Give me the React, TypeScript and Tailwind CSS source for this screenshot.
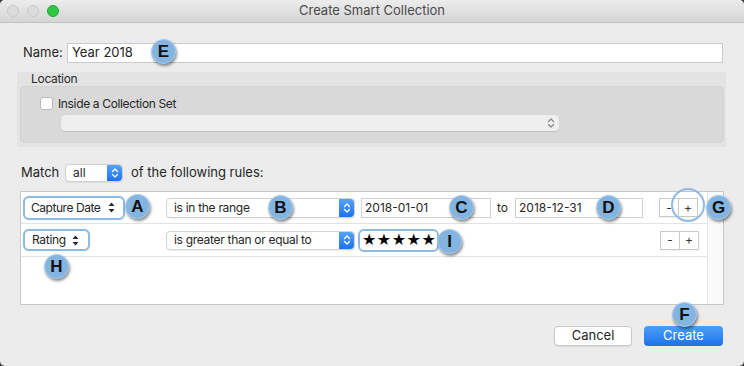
import React from "react";

function UpDownFilled() {
  return (
    <svg width="7" height="11" viewBox="0 0 7 11" className="shrink-0">
      <polygon points="3.5,0.5 6.5,4 0.5,4" fill="#2a2a2a" />
      <polygon points="0.5,7 6.5,7 3.5,10.5" fill="#2a2a2a" />
    </svg>
  );
}

function UpDownStroke({ color }: { color: string }) {
  return (
    <svg width="8" height="12" viewBox="0 0 8 12" className="shrink-0">
      <path d="M1.5 4.5 L4 2 L6.5 4.5" fill="none" stroke={color} strokeWidth="1.3" strokeLinecap="round" strokeLinejoin="round" />
      <path d="M1.5 7.5 L4 10 L6.5 7.5" fill="none" stroke={color} strokeWidth="1.3" strokeLinecap="round" strokeLinejoin="round" />
    </svg>
  );
}

function BlueStep() {
  return (
    <div className="flex h-full w-[15px] shrink-0 items-center justify-center rounded-r-[4px] bg-gradient-to-b from-[#56a3f9] to-[#1b72ea]">
      <UpDownStroke color="#ffffff" />
    </div>
  );
}

function Badge({ letter, className }: { letter: string; className: string }) {
  return (
    <div
      className={
        "absolute flex h-[25px] w-[25px] items-center justify-center rounded-full border border-[#a6cbee] bg-[#84b4e0] text-[17px] font-bold leading-none text-[#111] shadow-[1px_2px_3px_rgba(0,0,0,0.45)] font-['Liberation_Sans',sans-serif] " +
        className
      }
    >
      {letter}
    </div>
  );
}

function PlusMinus() {
  return (
    <div className="flex h-[19px] w-[39px] border border-[#c9c9c9] bg-white text-[12px] text-[#333] shadow-[0_1px_0_rgba(0,0,0,0.05)]">
      <div className="flex flex-1 items-center justify-center border-r border-[#c9c9c9] leading-none">-</div>
      <div className="flex flex-1 items-center justify-center leading-none">+</div>
    </div>
  );
}

export default function App() {
  return (
    <div className="h-[366px] w-[744px] bg-[#3a3a3a] font-[Inter,sans-serif]">
      <div className="relative h-[366px] w-[744px] overflow-hidden rounded-[5px] bg-[#ececec] text-[13px] text-[#262626]">
        {/* Title bar */}
        <div className="relative flex h-[23px] items-center border-b border-[#c2c2c2] bg-gradient-to-b from-[#ececec] to-[#d5d5d5]">
          <div className="flex gap-[8px] pl-[7px]">
            <span className="h-[12px] w-[12px] rounded-full border border-[#c8c8c8] bg-[#dcdcdc]" />
            <span className="h-[12px] w-[12px] rounded-full border border-[#c8c8c8] bg-[#dcdcdc]" />
            <span className="h-[12px] w-[12px] rounded-full border border-[#23a936] bg-[#2ec942]" />
          </div>
          <div className="absolute inset-0 flex items-center justify-center text-[13px] text-[#4a4a4a]">
            Create Smart Collection
          </div>
        </div>

        {/* Name row */}
        <div className="mt-[20px] flex h-[20px] items-center">
          <span className="ml-[23px] w-[44px]">Name:</span>
          <div className="flex h-[20px] w-[656px] items-center border border-[#cacaca] bg-white pl-[4px]">Year 2018</div>
        </div>

        {/* Location */}
        <div className="ml-[17px] mt-[9px] flex h-[75px] w-[709px] flex-col bg-[#e3e3e3]">
          <div className="h-[14px] pl-[14px] text-[12px] leading-[14px] tracking-[-0.3px] text-[#2a2a2a]">Location</div>
          <div className="ml-[3px] flex h-[57px] w-[704px] flex-col rounded-[4px] border border-[#d3d3d3] bg-[#d9d9d9]">
            <div className="ml-[19px] mt-[10px] flex h-[13px] items-center gap-[5px] text-[12px] tracking-[-0.35px]">
              <span className="h-[13px] w-[13px] rounded-[3px] border border-[#b8b8b8] bg-white" />
              <span>Inside a Collection Set</span>
            </div>
            <div className="ml-[40px] mt-[5px] flex h-[16px] w-[498px] items-center justify-end rounded-[4px] bg-[#efefef] pr-[4px] shadow-[0_0.5px_1px_rgba(0,0,0,0.12)]">
              <UpDownStroke color="#8a8a8a" />
            </div>
          </div>
        </div>

        {/* Match row */}
        <div className="mt-[17px] flex h-[18px] items-center">
          <span className="ml-[21px] w-[44px]">Match</span>
          <div className="flex h-[18px] w-[58px] items-center rounded-[4px] border border-[#cfcfcf] bg-white shadow-[0_1px_1px_rgba(0,0,0,0.06)]">
            <span className="flex-1 pl-[7px] text-[12px]">all</span>
            <BlueStep />
          </div>
          <span className="ml-[8px]">of the following rules:</span>
        </div>

        {/* Rules table */}
        <div className="ml-[20px] mt-[9px] flex h-[114px] w-[704px] border border-[#c7c7c7] bg-white">
          <div className="flex flex-1 flex-col">
            {/* Row 1 */}
            <div className="flex h-[32px] items-center border-b border-[#e3e3e3]">
              <div className="ml-[2px] flex h-[24px] w-[102px] items-center gap-[6px] whitespace-nowrap rounded-[6px] border-2 border-[#8fbbe3] bg-white pl-[6px] pr-[8px] text-[12px] tracking-[-0.45px] shadow-[0_0_1px_rgba(0,0,0,0.2)]">
                <span className="flex-1">Capture Date</span>
                <UpDownFilled />
              </div>
              <div className="ml-[41px] flex h-[20px] w-[189px] items-center whitespace-nowrap rounded-[4px] border border-[#d2d2d2] bg-white text-[12px] tracking-[-0.3px] shadow-[0_1px_1px_rgba(0,0,0,0.06)]">
                <span className="flex-1 pl-[7px]">is in the range</span>
                <BlueStep />
              </div>
              <div className="ml-[6px] flex h-[20px] w-[130px] items-center border border-[#d0d0d0] bg-white pl-[3px] text-[12px]">2018-01-01</div>
              <span className="ml-[6px] text-[12px]">to</span>
              <div className="ml-[7px] flex h-[20px] w-[128px] items-center border border-[#d0d0d0] bg-white pl-[3px] text-[12px]">2018-12-31</div>
              <div className="ml-[16px]">
                <PlusMinus />
              </div>
            </div>
            {/* Row 2 */}
            <div className="flex h-[33px] items-center border-b border-[#e3e3e3]">
              <div className="ml-[2px] flex h-[22px] w-[67px] items-center gap-[6px] whitespace-nowrap rounded-[6px] border-2 border-[#8fbbe3] bg-white pl-[7px] pr-[9px] text-[12px] tracking-[-0.3px] shadow-[0_0_1px_rgba(0,0,0,0.2)]">
                <span className="flex-1">Rating</span>
                <UpDownFilled />
              </div>
              <div className="ml-[76px] flex h-[19px] w-[189px] items-center whitespace-nowrap rounded-[4px] border border-[#d2d2d2] bg-white text-[12px] tracking-[-0.3px] shadow-[0_1px_1px_rgba(0,0,0,0.06)]">
                <span className="flex-1 pl-[7px]">is greater than or equal to</span>
                <BlueStep />
              </div>
              <div className="ml-[3px] flex h-[23px] w-[81px] items-center rounded-[6px] border-2 border-[#8fbbe3] bg-white pl-[2px] text-[16px] leading-none tracking-[0.5px] text-black font-['DejaVu_Sans',sans-serif]">
                ★★★★★
              </div>
              <div className="ml-[221px]">
                <PlusMinus />
              </div>
            </div>
          </div>
          <div className="w-[16px] border-l border-[#e6e6e6] bg-[#fafafa]" />
        </div>

        {/* Buttons */}
        <div className="mt-[21px] flex h-[20px] justify-end gap-[12px] pr-[21px]">
          <div className="flex h-[20px] w-[78px] items-center justify-center rounded-[4px] border border-[#c8c8c8] bg-white shadow-[0_1px_1px_rgba(0,0,0,0.08)]">
            Cancel
          </div>
          <div className="flex h-[20px] w-[79px] items-center justify-center rounded-[4px] bg-gradient-to-b from-[#4c9ff8] to-[#1a72ea] text-white">
            Create
          </div>
        </div>

        {/* Annotation ring around + */}
        <div className="absolute left-[671px] top-[188px] h-[34px] w-[34px] rounded-full border-2 border-[#8fbbe3]" />

        {/* Badges */}
        <Badge letter="E" className="left-[151px] top-[39px]" />
        <Badge letter="A" className="left-[125px] top-[194px]" />
        <Badge letter="B" className="left-[268px] top-[195px]" />
        <Badge letter="C" className="left-[449px] top-[195px]" />
        <Badge letter="D" className="left-[596px] top-[195px]" />
        <Badge letter="G" className="left-[706px] top-[195px]" />
        <Badge letter="H" className="left-[44px] top-[254px]" />
        <Badge letter="I" className="left-[437px] top-[229px]" />
        <Badge letter="F" className="left-[672px] top-[302px]" />
      </div>
    </div>
  );
}
